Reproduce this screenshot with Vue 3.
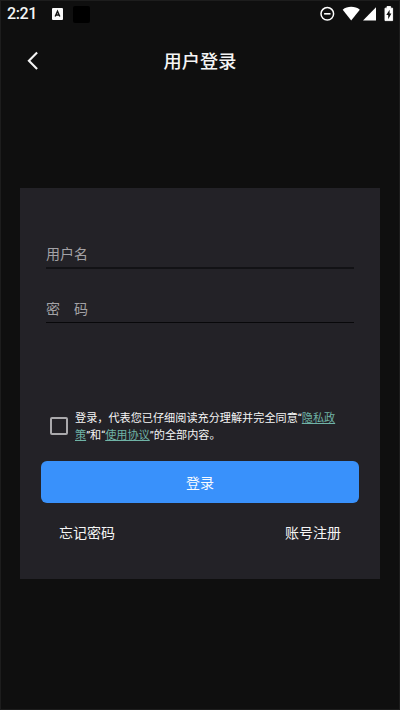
<script setup>
import { ref } from 'vue'

const username = ref('')
const password = ref('')
const agreed = ref(false)
</script>

<template>
  <div class="screen">
    <div class="status">
      <span class="clock">2:21</span>
      <svg class="badge" width="11" height="12" viewBox="0 0 11 12">
        <rect width="11" height="12" rx="1" fill="#fafafa" />
        <path d="M3.2 8.6 5.5 3.2 7.8 8.6M4 7h3" fill="none" stroke="#111" stroke-width="1.4" />
      </svg>
      <span class="block"></span>
      <svg class="icons" width="76" height="18" viewBox="0 0 76 18">
        <circle cx="7.3" cy="8.8" r="6.3" fill="none" stroke="#fff" stroke-width="1.5" />
        <path d="M4.1 8.8h6.4" stroke="#fff" stroke-width="1.6" />
        <path d="M22.7 4.7C27.3 .9 35.1 .9 39.8 4.7L31.2 15.6Z" fill="#fff" />
        <path d="M56 2.3V15.6H43Z" fill="#fff" />
        <path d="M65 3.2h2V1.5h3.6v1.7h2v12.4H65z" fill="#fff" stroke="#fff" stroke-width=".9" stroke-linejoin="round" />
        <path d="M69.6 4.8 66.3 10h1.9v4.2l3.2-5.6h-1.8z" fill="#111" />
      </svg>
    </div>
    <header class="header">
      <svg class="back" width="14" height="20" viewBox="0 0 14 20">
        <path d="M11.1 1.4 2.9 9.7l8.2 8.3" fill="none" stroke="#f4f4f4" stroke-width="2.1" />
      </svg>
      <h1 class="title">用户登录</h1>
    </header>
    <form class="card" @submit.prevent>
      <input v-model="username" class="field" type="text" placeholder="用户名" />
      <input v-model="password" class="field second" type="password" placeholder="密　码" />
      <div class="agreement">
        <input v-model="agreed" class="check" type="checkbox" />
        <p class="terms">登录，代表您已仔细阅读充分理解并完全同意“<a>隐私政<br />策</a>”和“<a>使用协议</a>”的全部内容。</p>
      </div>
      <button class="submit" type="submit">登录</button>
      <div class="links">
        <span>忘记密码</span>
        <span>账号注册</span>
      </div>
    </form>
  </div>
</template>

<style>
body {
  background: #0f0f0f;
}
</style>

<style scoped>
.screen {
  box-sizing: border-box;
  width: 400px;
  height: 710px;
  border: 1px solid #1d1d1d;
  background: #0f0f0f;
  color: #f5f5f5;
  font-family: Roboto, "Noto Sans CJK SC", sans-serif;
  overflow: hidden;
}
.status {
  display: flex;
  align-items: center;
  height: 26px;
  padding: 0 3px 0 6px;
}
.clock {
  width: 45px;
  font-size: 16px;
  font-weight: 500;
  letter-spacing: -0.4px;
  line-height: 26px;
}
.block {
  width: 17px;
  height: 17px;
  margin-left: 10px;
  border-radius: 2px;
  background: #000;
}
.icons {
  margin-left: auto;
}
.header {
  display: grid;
  grid-template-columns: 60px 1fr 60px;
  align-items: center;
  height: 67px;
}
.back {
  margin-left: 25px;
}
.title {
  margin: 0;
  padding-top: 2px;
  font-size: 18.2px;
  font-weight: 500;
  line-height: 26px;
  text-align: center;
}
.card {
  box-sizing: border-box;
  width: 360px;
  height: 391px;
  margin: 94px 0 0 19px;
  padding: 53px 20px 0 21px;
  background: #232227;
}
.field {
  display: block;
  box-sizing: border-box;
  width: 308px;
  height: 28px;
  margin-left: 5px;
  padding: 0;
  border: 0;
  border-bottom: 2px solid #121215;
  outline: 0;
  background: transparent;
  color: #f5f5f5;
  font-family: inherit;
  font-size: 14px;
}
.second {
  height: 27px;
  margin-top: 27px;
  border-bottom: 1px solid #08080a;
}
.field::placeholder {
  color: #a3a2a6;
  opacity: 1;
}
.agreement {
  display: flex;
  align-items: center;
  margin: 87px 0 0 9px;
}
.check {
  box-sizing: border-box;
  flex: none;
  width: 18px;
  height: 18px;
  margin: 0 7px 2px 0;
  border: 2px solid #aaa9ac;
  border-radius: 2px;
  appearance: none;
}
.terms {
  margin: 0;
  font-size: 11.15px;
  line-height: 17px;
  white-space: nowrap;
}
.terms a {
  color: #6fb3a6;
  text-decoration: underline;
}
.submit {
  display: block;
  width: 318px;
  height: 42px;
  margin-top: 17px;
  padding: 0;
  border: 0;
  border-radius: 6px;
  background: #3991fb;
  color: #f7faff;
  font-family: inherit;
  font-size: 14px;
}
.links {
  display: flex;
  justify-content: space-between;
  margin-top: 20px;
  padding: 0 19px 0 18px;
  font-size: 14px;
  line-height: 21px;
}
</style>
